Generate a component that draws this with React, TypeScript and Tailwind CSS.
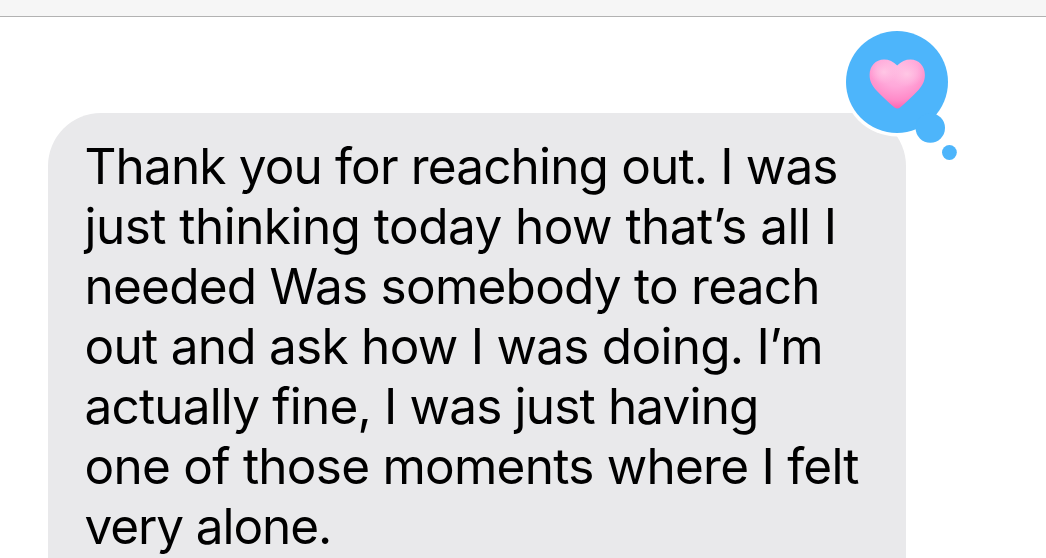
import React from 'react';

const lines = [
  { text: 'Thank you for reaching out. I was', className: 'tracking-[-0.85px]' },
  { text: 'just thinking today how that’s all I', className: 'tracking-[-0.54px]' },
  { text: 'needed Was somebody to reach', className: 'tracking-[-0.76px]' },
  { text: 'out and ask how I was doing. I’m', className: 'tracking-[-0.73px]' },
  { text: 'actually fine, I was just having', className: 'tracking-[-0.83px]' },
  { text: 'one of those moments where I felt', className: 'tracking-[-0.75px]' },
  { text: 'very alone.', className: 'tracking-[-1.1px]' },
];

const HeartReaction: React.FC = () => (
  <svg
    className="absolute left-[790px] -top-[90px]"
    width="120"
    height="140"
    viewBox="838 23 120 140"
    role="img"
    aria-label="Heart reaction"
  >
    <defs>
      <radialGradient id="heartBase" gradientUnits="userSpaceOnUse" cx="897" cy="66" r="45">
        <stop offset="0" stopColor="#ffbce2" />
        <stop offset="0.45" stopColor="#ffa9da" />
        <stop offset="0.75" stopColor="#ff8bc9" />
        <stop offset="1" stopColor="#fb5cad" />
      </radialGradient>
      <radialGradient id="heartGlow" cx="0.5" cy="0.5" r="0.5">
        <stop offset="0" stopColor="#ffcde7" stopOpacity="0.8" />
        <stop offset="1" stopColor="#ffc0e2" stopOpacity="0" />
      </radialGradient>
      <clipPath id="heartClip">
        <path d="M897.200 65.500C893.500 61.300 889 59.400 884 59.400C875.500 59.400 869.600 66 869.600 75C869.600 81 872 85.500 876 90C881.500 96.200 888.500 102.300 894.500 107.500Q897.300 109.500 900.100 107.500C906 102.300 913 96.200 918.500 90C922.500 85.500 924.900 81 924.900 75C924.900 66 919 59.400 910.500 59.400C905.500 59.400 901 61.300 897.200 65.500Z" />
      </clipPath>
    </defs>
    <circle cx="897" cy="82" r="54.500" fill="#fff" />
    <g fill="#4db5fb">
      <circle cx="897" cy="82" r="51" />
      <circle cx="930.300" cy="128" r="14.700" />
      <circle cx="949.400" cy="152.500" r="7.400" />
    </g>
    <g clipPath="url(#heartClip)">
      <rect x="869" y="58" width="57" height="53" fill="url(#heartBase)" />
      <ellipse cx="884" cy="72" rx="14" ry="12" fill="url(#heartGlow)" />
      <ellipse cx="907" cy="74" rx="16" ry="13" fill="url(#heartGlow)" />
    </g>
  </svg>
);

const MessageBubble: React.FC = () => (
  <div className="relative mt-24 ml-12 h-[520px] w-[858px] shrink-0 rounded-[53px] bg-[#e9e9eb] pt-[23px] pl-[36.5px]">
    <p className="font-['Inter',sans-serif] text-[49.5px] leading-[60px] whitespace-nowrap text-black">
      {lines.map((line) => (
        <span key={line.text} className={`block ${line.className}`}>
          {line.text}
        </span>
      ))}
    </p>
    <HeartReaction />
  </div>
);

export default function App() {
  return (
    <div className="flex h-[558px] w-[1046px] flex-col overflow-hidden bg-white">
      <div className="h-[17px] shrink-0 border-b border-[#b2b2b2] bg-[#f6f6f6]" />
      <MessageBubble />
    </div>
  );
}
